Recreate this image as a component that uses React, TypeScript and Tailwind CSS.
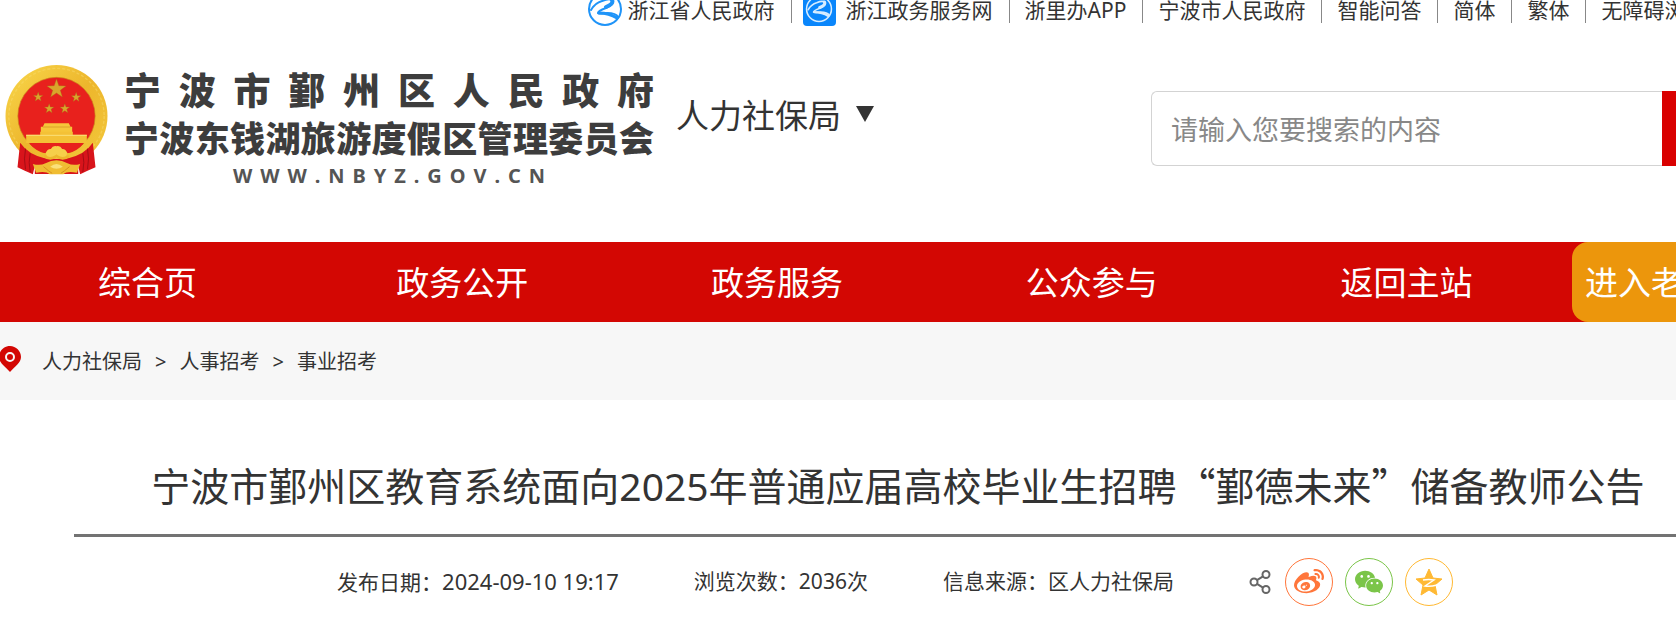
import React from 'react';
import { FaWeibo } from 'react-icons/fa6';
import { AiFillWechat } from 'react-icons/ai';

const topLinks = ['浙里办APP', '宁波市人民政府', '智能问答', '简体', '繁体', '无障碍浏览'];
const navItems = ['综合页', '政务公开', '政务服务', '公众参与', '返回主站'];
const crumbs = ['人力社保局', '人事招考', '事业招考'];

const stars = [
  { x: 169, y: 117, r: 30 },
  { x: 114, y: 141, r: 15 },
  { x: 228, y: 142, r: 15 },
  { x: 147, y: 176, r: 15 },
  { x: 194, y: 176, r: 15 },
];

const starPoints = (cx: number, cy: number, r: number) =>
  Array.from({ length: 10 }, (_, i) => {
    const radius = i % 2 ? r * 0.4 : r;
    const angle = (Math.PI / 5) * i - Math.PI / 2;
    return `${cx + radius * Math.cos(angle)},${cy + radius * Math.sin(angle)}`;
  }).join(' ');

const Emblem = () => (
  <svg viewBox="15 45 308 330" className="h-[110px] w-[103px] shrink-0" aria-hidden="true">
    <defs>
      <linearGradient id="gold" x1="0" y1="0" x2="1" y2="1">
        <stop offset="0" stopColor="#f9d84c" />
        <stop offset="0.5" stopColor="#edb62c" />
        <stop offset="1" stopColor="#f3c93c" />
      </linearGradient>
    </defs>
    <circle cx="169" cy="198" r="153" fill="url(#gold)" />
    <circle cx="169" cy="198" r="143" fill="none" stroke="#fbe27a" strokeWidth="4" strokeDasharray="9 6" opacity="0.4" />
    <circle cx="169" cy="198" r="116" fill="#e8211d" stroke="#c98a1c" strokeWidth="2" />
    {stars.map((s) => (
      <polygon key={`${s.x}-${s.y}`} points={starPoints(s.x, s.y, s.r)} fill="#d9a62b" stroke="#a8661a" strokeWidth="1" />
    ))}
    <path d="M133 220 H206 L211 230 H216 V246 H122 V230 H128 Z" fill="#f6c63a" />
    <path d="M128 231 H211" stroke="#cf8f22" strokeWidth="2" />
    <path d="M78 254 H120 V245 H218 V254 H260 V279 H78 Z" fill="#f4c136" />
    <path d="M78 256 H260" stroke="#fbe07a" strokeWidth="3" />
    <path d="M88 281 H250 Q232 302 206 309 H132 Q106 302 88 281 Z" fill="#e8211d" />
    <path d="M60 278 Q84 314 138 326 L106 340 L98 373 L74 362 L52 352 Z" fill="#d8141b" />
    <path d="M278 278 Q254 314 200 326 L232 340 L240 373 L262 362 L286 352 Z" fill="#d8141b" />
    <path d="M76 296 Q70 326 76 358 M90 310 Q84 336 90 366 M262 296 Q268 326 262 358 M248 310 Q254 336 248 366" fill="none" stroke="#a50d14" strokeWidth="3" />
    <path d="M104 326 H234 V372 H104 Z" fill="#d8141b" />
    <path d="M136 310 Q142 296 152 297 Q158 286 169 289 Q180 286 186 297 Q196 296 202 310 L192 326 H146 Z" fill="#f6cf4a" />
    <path d="M132 318 Q150 332 169 318 Q188 332 206 318" fill="none" stroke="#edb62c" strokeWidth="8" />
    <path d="M98 342 Q120 348 136 340 Q169 322 202 340 Q218 348 240 342 L230 368 Q200 362 190 373 H148 Q138 362 108 368 Z" fill="#f0bd33" />
    <path d="M130 350 Q146 364 156 370 M208 350 Q192 364 182 370" stroke="#d8921f" strokeWidth="3" fill="none" />
    <path d="M150 350 Q169 334 188 350 Q169 362 150 350 Z" fill="#fae07a" />
  </svg>
);

const ZhejiangMark = ({ className, color }: { className: string; color: string }) => (
  <svg viewBox="0 0 36 36" className={className} fill="none" stroke={color} strokeLinecap="round" aria-hidden="true">
    <circle cx="18" cy="18" r="16" strokeWidth="2" />
    <path d="M4 19 Q8 12 15 10 Q22 7 25 9 Q28 13 19 17 Q11 20 11 22 Q13 23 20 22 Q29 22 31 26" strokeWidth="2" />
    <path d="M25 9 Q27 13 19 16" strokeWidth="4" />
    <path d="M12 22 Q22 22 30 27" strokeWidth="3" />
  </svg>
);

const MapPin = () => (
  <svg viewBox="0 0 22 26" className="mb-1 h-[26px] w-[22px] shrink-0" aria-hidden="true">
    <path d="M10 0 C4 0 -1 5 -1 11 C-1 17 5 20 10 26 C15 20 21 17 21 11 C21 5 16 0 10 0 Z" fill="#d30703" />
    <circle cx="10" cy="11" r="4" fill="#d30703" stroke="#f7f7f7" strokeWidth="2" />
  </svg>
);

const ShareIcon = () => (
  <svg viewBox="0 0 22 24" className="h-6 w-[22px]" fill="none" stroke="#666" strokeWidth="2" aria-hidden="true">
    <circle cx="5" cy="12" r="3.5" />
    <circle cx="17" cy="4.5" r="3.5" />
    <circle cx="17" cy="19.5" r="3.5" />
    <path d="M8 10.2 L14 6.3 M8 13.8 L14 17.7" />
  </svg>
);

const QzoneIcon = () => (
  <svg viewBox="0 0 28 28" className="size-7" aria-hidden="true">
    <path d="M14 1 L18 10 L27 11 L20 17 L22 27 L14 22 L6 27 L8 17 L1 11 L10 10 Z" fill="#ffb933" stroke="#ffb933" strokeLinejoin="round" />
    <path d="M8 12 Q14 11 19 12 L10 18 Q15 19 22 17" fill="none" stroke="#fff" strokeWidth="1.5" />
  </svg>
);

const Divider = () => <span className="h-[27px] w-px shrink-0 bg-[#888]" />;

export default function App() {
  return (
    <div className="overflow-x-hidden bg-white font-['Noto_Sans','Noto_Sans_CJK_SC',sans-serif] text-[#333]">
      <div className="ml-[35%] flex h-[18px] items-center gap-[15px] text-[21px] whitespace-nowrap">
        <a href="#" className="flex items-center gap-[5px] pr-px">
          <ZhejiangMark className="size-9" color="#1f94f8" />
          <span className="pt-1">浙江省人民政府</span>
        </a>
        <Divider />
        <a href="#" className="-ml-1 flex items-center gap-[10px] pr-px">
          <span className="flex size-[33px] items-center justify-center rounded-sm bg-[#0a86fb]">
            <ZhejiangMark className="size-7" color="#d7ecff" />
          </span>
          <span className="pt-1">浙江政务服务网</span>
        </a>
        {topLinks.map((label) => (
          <React.Fragment key={label}>
            <Divider />
            <a href="#" className="pt-1 pr-px">
              {label}
            </a>
          </React.Fragment>
        ))}
      </div>

      <header className="flex h-[224px] items-start pl-[5px]">
        <a href="#" className="mt-[47px] flex">
          <Emblem />
          <span className="ml-4 block w-[530px] font-black text-[#3d3d3d]">
            <span className="mt-1 block text-[37px] leading-[44px] [text-align-last:justify]">宁 波 市 鄞 州 区 人 民 政 府</span>
            <span className="block text-[35px] leading-[52px] whitespace-nowrap [text-align-last:justify]">宁波东钱湖旅游度假区管理委员会</span>
            <span className="mx-auto block w-[312px] text-[20px] leading-[22px] font-bold text-[#555] [text-align-last:justify]">
              W W W . N B Y Z . G O V . C N
            </span>
          </span>
        </a>
        <button className="mt-[74px] ml-[22px] flex items-center gap-[15px] text-[33px] leading-[48px] whitespace-nowrap">
          人力社保局
          <svg viewBox="0 0 18 16" className="mb-1 h-4 w-[18px]" aria-hidden="true">
            <path d="M0 0 H18 L9 16 Z" fill="#333" />
          </svg>
        </button>
        <form className="mt-[73px] ml-auto flex h-[75px] w-[525px]">
          <input
            type="text"
            aria-label="搜索"
            placeholder="请输入您要搜索的内容"
            className="min-w-0 flex-1 rounded-l-md border border-r-0 border-[#d3d3d3] pt-1 pl-[19px] text-[27px] placeholder:text-[#888]"
          />
          <button type="button" aria-label="搜索" className="w-[14px] bg-[#d90000]" />
        </form>
      </header>

      <nav className="flex h-20 items-center bg-[#d30703] text-[33px] whitespace-nowrap text-white">
        <ul className="mr-2 -ml-[10px] grid flex-1 grid-cols-5 pt-0.5 text-center">
          {navItems.map((item) => (
            <li key={item}>
              <a href="#">{item}</a>
            </li>
          ))}
        </ul>
        <a href="#" className="flex h-full w-[104px] items-center rounded-l-2xl bg-[#ec960c] pt-0.5 pl-[13px]">
          进入老年版
        </a>
      </nav>

      <div className="flex h-[78px] items-center gap-5 bg-[#f7f7f7] text-[20px]">
        <MapPin />
        <ol className="flex items-center gap-[13px] pt-0.5">
          {crumbs.map((crumb, i) => (
            <React.Fragment key={crumb}>
              {i > 0 && <li>&gt;</li>}
              <li>
                <a href="#">{crumb}</a>
              </li>
            </React.Fragment>
          ))}
        </ol>
      </div>

      <main className="-mr-[46px] ml-[74px]">
        <h1 className="border-b-3 border-[#737373] pt-[54px] pb-[18px] text-center text-[39px] leading-[60px] whitespace-nowrap">
          宁波市鄞州区教育系统面向2025年普通应届高校毕业生招聘
          <span className="font-['Noto_Sans_CJK_SC',sans-serif]">“鄞德未来”</span>
          储备教师公告
        </h1>
        <div className="flex items-center justify-center gap-[75px] pt-[21px] pr-[6px] pb-[15px] text-[21px]">
          <span>
            发布日期：<time className="text-[22px]">2024-09-10 19:17</time>
          </span>
          <span>浏览次数：2036次</span>
          <span>信息来源：区人力社保局</span>
          <div className="flex items-center gap-3">
            <ShareIcon />
            <a href="#" aria-label="微博" className="ml-0.5 flex size-12 items-center justify-center rounded-full border border-[#ff763b] text-[#ff763b]">
              <FaWeibo className="size-[30px]" />
            </a>
            <a href="#" aria-label="微信" className="flex size-12 items-center justify-center rounded-full border border-[#7bc549] text-[#7bc549]">
              <AiFillWechat className="size-8" />
            </a>
            <a href="#" aria-label="QQ空间" className="flex size-12 items-center justify-center rounded-full border border-[#ffb933]">
              <QzoneIcon />
            </a>
          </div>
        </div>
      </main>
    </div>
  );
}
